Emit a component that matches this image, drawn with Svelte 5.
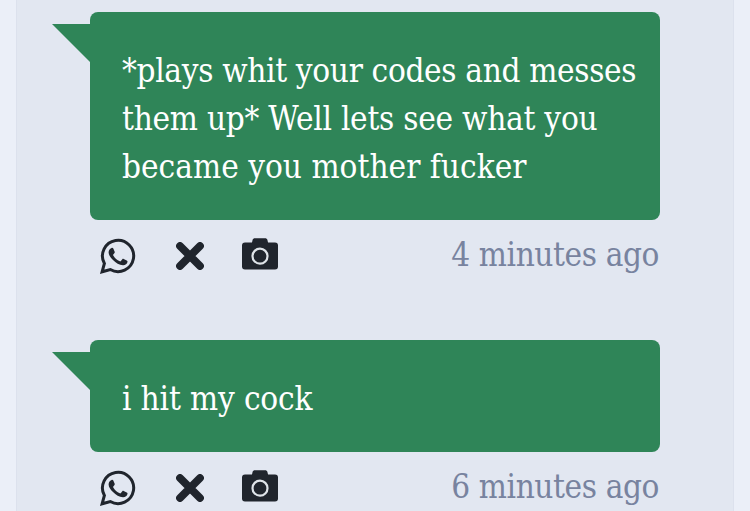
<script lang="ts">
  interface Line {
    text: string;
    tracking: number;
  }

  interface Message {
    lines: Line[];
    time: string;
  }

  const messages: Message[] = [
    {
      lines: [
        { text: "*plays whit your codes and messes", tracking: -0.33 },
        { text: "them up* Well lets see what you", tracking: -0.25 },
        { text: "became you mother fucker", tracking: 0.02 },
      ],
      time: "4 minutes ago",
    },
    {
      lines: [{ text: "i hit my cock", tracking: -0.15 }],
      time: "6 minutes ago",
    },
  ];
</script>

<main class="panel">
  {#each messages as message}
    <article class="message">
      <div class="bubble">
        <svg class="tail" width="38" height="38" viewBox="0 0 38 38" aria-hidden="true">
          <path d="M0 0h38v38z" fill="currentColor" />
        </svg>
        {#each message.lines as line}
          <div class="line" style="letter-spacing: {line.tracking}px;">{line.text}</div>
        {/each}
      </div>
      <div class="footer">
        <div class="actions">
          <svg width="36" height="36" viewBox="0 0 36 36" aria-label="WhatsApp">
            <path d="M2.1 33.8l2.3-8.3A15.6 15.6 0 1 1 10.3 31.5z" fill="none" stroke="currentColor" stroke-width="3" />
            <path
              d="M11.6 9.9c.8-.2 1.4 0 1.7.7l1.4 3.2c.2.6 0 1-.4 1.4l-1 1.3c-.3.4-.3.7 0 1.1 1.7 2.8 3.6 4.4 6.5 5.7.5.2.8.1 1.1-.3l1.4-1.7c.4-.5.8-.6 1.4-.3l3 1.4c.7.3.9.6.8 1.3-.2 2.4-2.5 3.6-4.6 3.5-3.5-.2-7.1-2.2-9.9-5.2-2.6-2.7-4.3-4.9-4.4-7.6 0-1.9 1-3.9 3-4.5z"
              fill="currentColor"
            />
          </svg>
          <svg width="28" height="28" viewBox="0 0 28 28" aria-label="Remove">
            <path d="M4 4l20 20M24 4L4 24" fill="none" stroke="currentColor" stroke-width="7.8" stroke-linecap="round" />
          </svg>
          <svg width="36" height="32" viewBox="0 0 36 32" aria-label="Screenshot">
            <path
              d="M3 4.6h7l.5-2.4C10.8.8 11.8.2 13 .2h10c1.2 0 2.2.6 2.5 2l.5 2.4h7c2 0 3 1 3 3v21c0 2-1 3-3 3H3c-2 0-3-1-3-3v-21c0-2 1-3 3-3z"
              fill="currentColor"
            />
            <circle cx="18" cy="18.2" r="7.5" fill="none" stroke="#dfe4e9" stroke-width="2.2" />
          </svg>
        </div>
        <time>{message.time}</time>
      </div>
    </article>
  {/each}
</main>

<style>
  :global(body) {
    background: #ebeff8;
    overflow: hidden;
  }

  .panel {
    box-sizing: border-box;
    width: 718px;
    height: 511px;
    margin: 0 auto;
    padding: 12px 73px 0;
    overflow: hidden;
    border: solid #dce1ed;
    border-width: 0 1px;
    background: #e2e7f1;
    font-family: "DejaVu Serif Condensed", "DejaVu Serif", "Liberation Serif", serif;
    font-stretch: condensed;
    font-size: 33px;
    line-height: 48px;
  }

  .bubble {
    position: relative;
    padding: 35px 32px 29px;
    border-radius: 8px;
    background: #2f8558;
    color: #fff;
  }

  .tail {
    position: absolute;
    top: 12px;
    left: -38px;
    color: #2f8558;
  }

  .line {
    width: max-content;
    white-space: pre;
  }

  .footer {
    display: flex;
    justify-content: space-between;
    height: 120px;
    padding-top: 12px;
    box-sizing: border-box;
  }

  .actions {
    display: flex;
    align-items: center;
    height: 48px;
    padding-left: 10px;
    color: #20252d;
  }

  .actions svg {
    display: block;
  }

  .actions svg:nth-child(2) {
    margin: 0 38px 0 40px;
  }

  .actions svg:nth-child(3) {
    margin-top: -4px;
  }

  time {
    margin-top: -1px;
    padding-right: 1px;
    color: #78839f;
    letter-spacing: -0.4px;
  }
</style>
